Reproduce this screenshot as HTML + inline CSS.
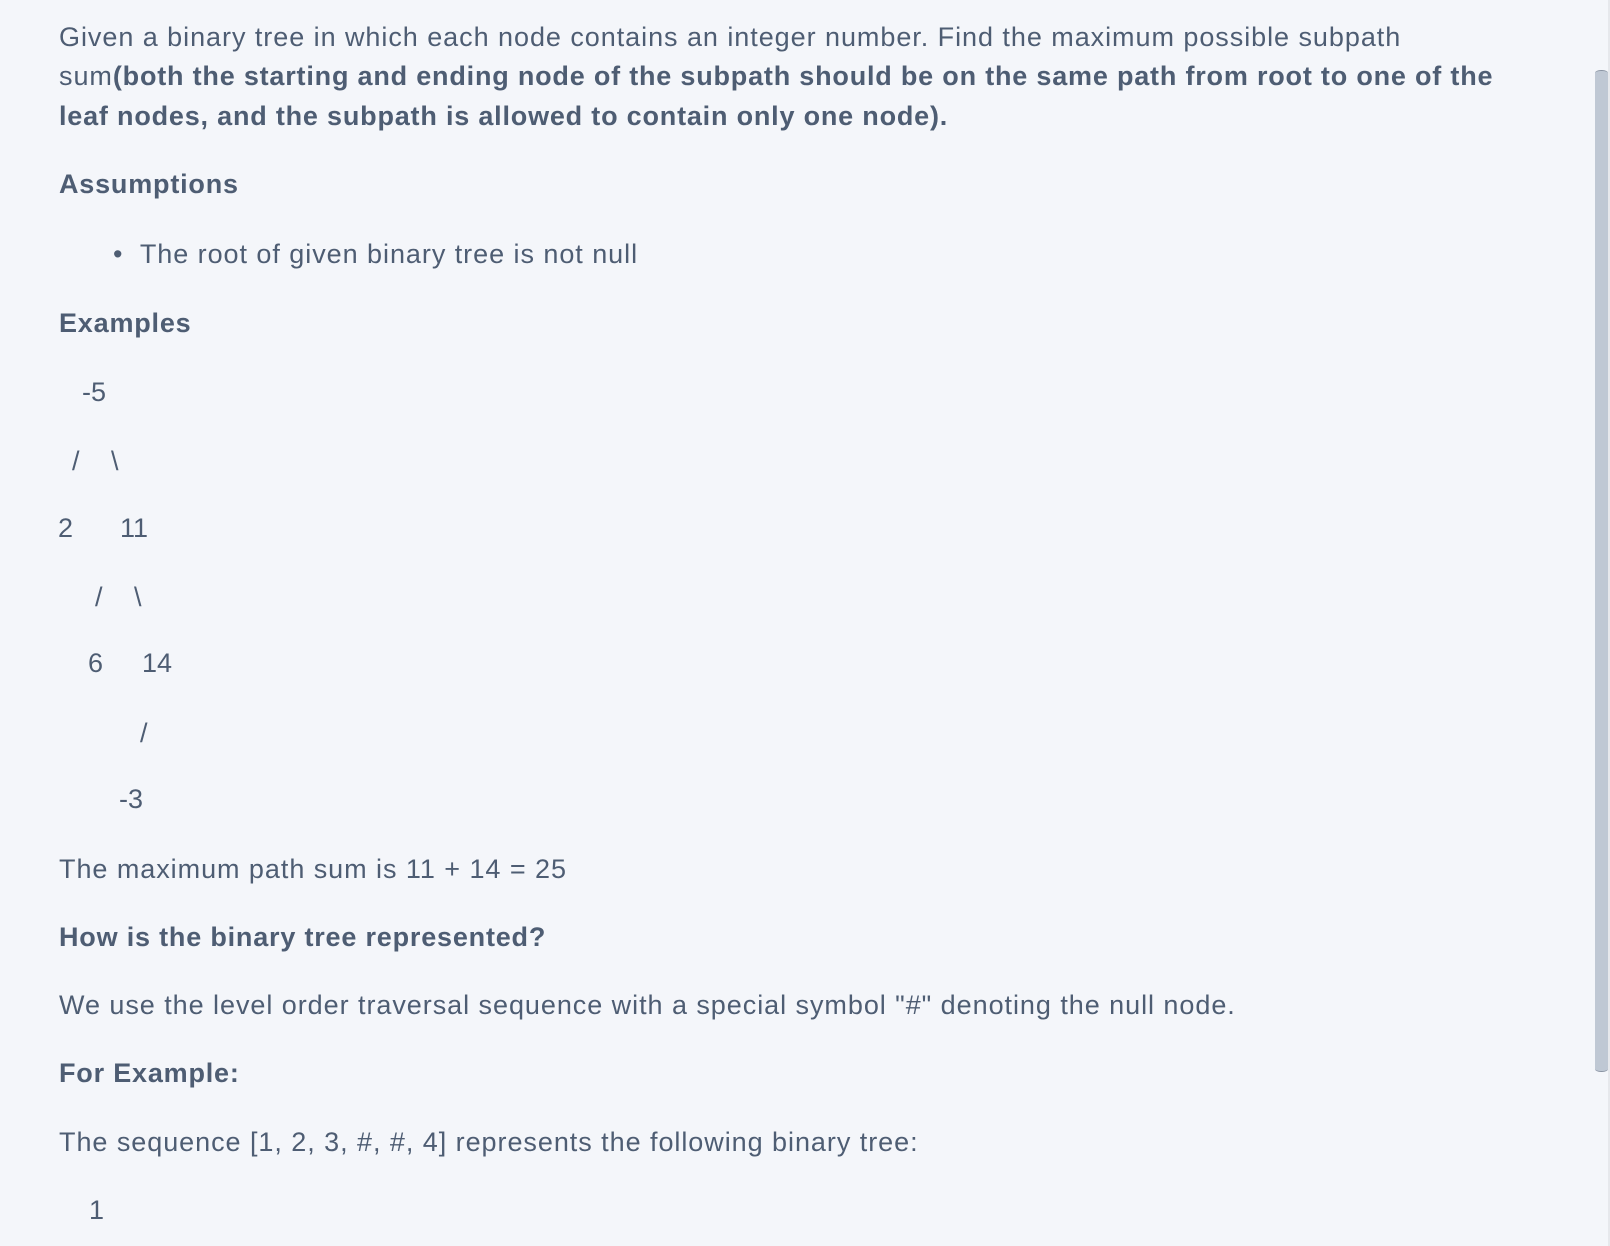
<!DOCTYPE html>
<html><head><meta charset="utf-8"><style>
html,body{margin:0;padding:0;width:1610px;height:1246px;overflow:hidden;background:#f4f6fa}
body{position:relative;font-family:"Liberation Sans",sans-serif;color:#4e5d73;font-size:27px}
.l{position:absolute;left:59px;line-height:40px;height:40px;white-space:nowrap;letter-spacing:0.95px}
.b{font-weight:bold;letter-spacing:0.8px}
.t{position:absolute;line-height:40px;white-space:pre;font-size:27px}
.sb{position:absolute;left:1595px;top:70px;width:13px;height:1002px;background:#bfc8d4;border-radius:6px/3px;border-top:1px solid #8a94a3;border-bottom:1px solid #8a94a3;box-sizing:border-box}
.tr{position:absolute;left:1608px;top:0;width:2px;height:1246px;background:#e6e8ec}
</style></head><body>
<div class="l" style="top:17px">Given a binary tree in which each node contains an integer number. Find the maximum possible subpath</div>
<div class="l" style="top:56px">sum<span class="b">(both the starting and ending node of the subpath should be on the same path from root to one of the</span></div>
<div class="l b" style="top:96px">leaf nodes, and the subpath is allowed to contain only one node).</div>
<div class="l b" style="top:164px">Assumptions</div>
<div class="l" style="top:234px;left:113px">•&nbsp; The root of given binary tree is not null</div>
<div class="l b" style="top:303px">Examples</div>
<div class="t" style="left:82px;top:372px">-5</div>
<div class="t" style="left:72px;top:441px">/</div><div class="t" style="left:111px;top:441px">\</div>
<div class="t" style="left:58px;top:508px">2</div><div class="t" style="left:120px;top:508px">11</div>
<div class="t" style="left:95px;top:577px">/</div><div class="t" style="left:134px;top:577px">\</div>
<div class="t" style="left:88px;top:643px">6</div><div class="t" style="left:142px;top:643px">14</div>
<div class="t" style="left:140px;top:713px">/</div>
<div class="t" style="left:119px;top:779px">-3</div>
<div class="l" style="top:849px">The maximum path sum is 11 + 14 = 25</div>
<div class="l b" style="top:917px">How is the binary tree represented?</div>
<div class="l" style="top:985px">We use the level order traversal sequence with a special symbol "#" denoting the null node.</div>
<div class="l b" style="top:1053px">For Example:</div>
<div class="l" style="top:1122px">The sequence [1, 2, 3, #, #, 4] represents the following binary tree:</div>
<div class="t" style="left:89px;top:1190px">1</div>
<div class="tr"></div><div class="sb"></div>
</body></html>
